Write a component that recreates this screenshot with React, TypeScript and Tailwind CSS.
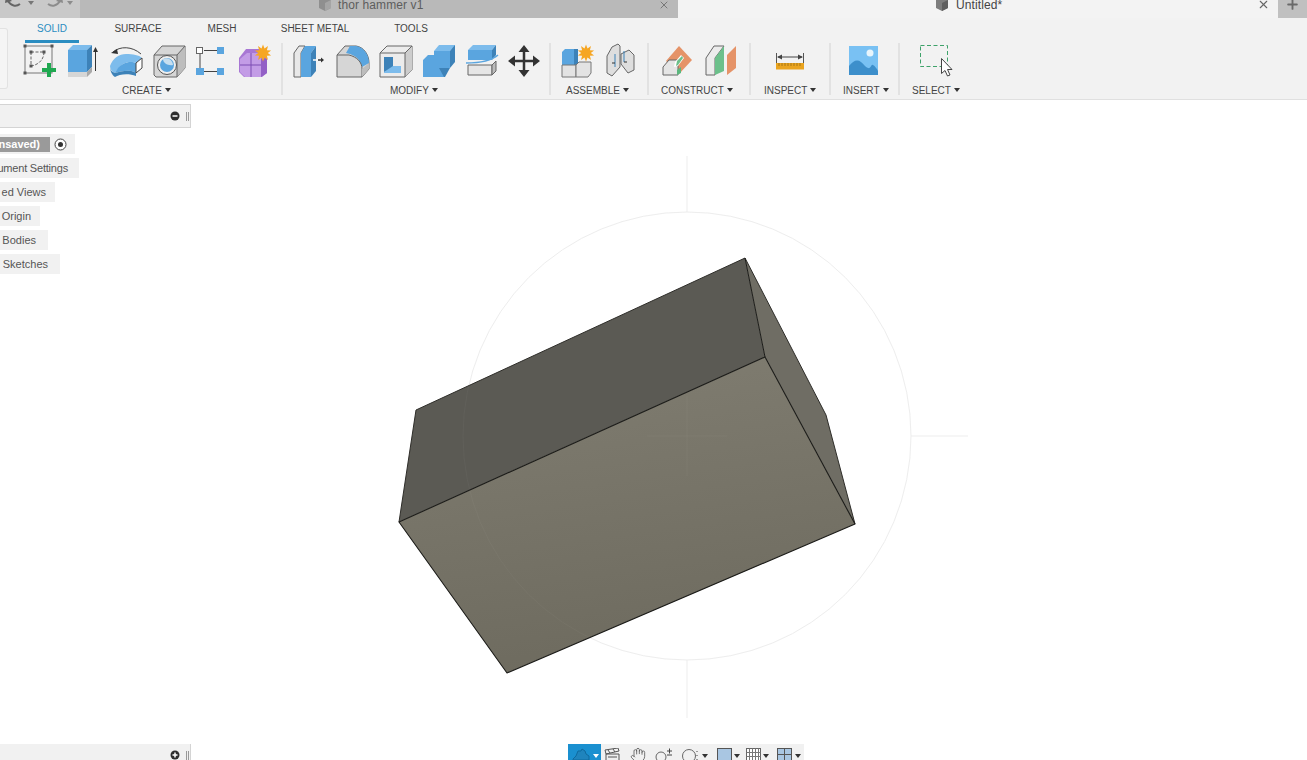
import React from "react";
import { Hand, X, Plus } from "lucide-react";

function star(cx: number, cy: number, R: number, r: number, n = 10) {
  const p: string[] = [];
  for (let i = 0; i < n * 2; i++) {
    const a = (Math.PI * i) / n;
    const q = i % 2 === 0 ? R : r;
    p.push(`${(cx + q * Math.sin(a)).toFixed(1)},${(cy - q * Math.cos(a)).toFixed(1)}`);
  }
  return p.join(" ");
}

function Caret() {
  return <span className="inline-block ml-[3px] w-0 h-0 border-l-[3px] border-r-[3px] border-t-[4px] border-l-transparent border-r-transparent border-t-[#333] align-[2px]" />;
}

function Icon({ w = 36, dx = 0, children }: { w?: number; dx?: number; children: React.ReactNode }) {
  return <svg width={w} height={36} viewBox={`${-dx} 0 ${w} 36`} className="shrink-0 overflow-visible">{children}</svg>;
}

const B = "#5aa5df", BD = "#3d82b8", BL = "#7dbcec", G = "#d6d6d6", GD = "#a9a9a9";

const SketchI = () => (
  <Icon>
    <rect x="3" y="3" width="27" height="27" fill="none" stroke="#777" />
    <path d="M9 9h13M9 9v14M22 9c0 8-6 13-13 14" fill="none" stroke="#666" strokeDasharray="3 1.500" />
    {[[3,3],[30,3],[3,30],[9,9],[22,9],[9,23]].map(([x,y],i)=><rect key={i} x={x-1.5} y={y-1.5} width="3" height="3" fill="#555"/>)}
    <path d="M25 20h4v5h5v4h-5v5h-4v-5h-5v-4h5z" fill="#1fa850"/>
  </Icon>
);
const ExtrudeI = () => (
  <Icon dx={2}>
    <path d="M1 7h19v22H1z" fill={B}/>
    <path d="M1 7l5-5h19l-5 5z" fill={BL}/>
    <path d="M20 7l5-5v22l-5 5z" fill={BD}/>
    <path d="M1 29h19v5H1z" fill={G}/>
    <path d="M20 29l5-5v5l-5 5z" fill={GD}/>
    <path d="M28.500 28V6" stroke="#333"/>
    <path d="M26 9l2.500-5 2.500 5z" fill="#333"/>
  </Icon>
);
const RevolveI = () => (
  <Icon dx={1}>
    <path d="M4 9C11 3 23 3 32 11" fill="none" stroke="#444"/>
    <path d="M2 10l6-4 1 5z" fill="#333"/>
    <path d="M1 23C4 15 10 11 17 11C24 11 30 12 33 15L27 20C22 18 18 19 14 21C11 23 8 27 6 30C3 29 1 26 1 23Z" fill={BL}/>
    <path d="M14 21C20 18 24 19 27 20V30C22 26 12 28 6 30C8 26 10 23 14 21Z" fill={B}/>
    <path d="M1 23C1 27 3 29 6 30C12 28 22 26 27 30V33C20 30 10 31 6 34C3 32 1 28 1 23Z" fill={BD}/>
    <path d="M27 20l6-5v10l-6 5z" fill="#fff" stroke="#444"/>
  </Icon>
);
const HoleI = () => (
  <Icon dx={1}>
    <path d="M2 12l8-9h23v22l-8 9H4l-2-2z" fill={G} stroke="#666"/>
    <path d="M25 12l8-9v22l-8 9z" fill="#bdbdbd"/>
    <path d="M2 12h23v22M25 12l8-9" fill="none" stroke="#666"/>
    <circle cx="15" cy="22" r="9.500" fill="#eee" stroke="#555"/>
    <circle cx="15" cy="22" r="7" fill={B}/>
    <path d="M11 16a7 7 0 0 1 10 6c-5 1-10-2-10-6z" fill="#c7deef"/>
  </Icon>
);
const FormPtsI = () => (
  <Icon dx={-2}>
    <path d="M12 7.500h13M8 11v14M12 28.500h13" stroke="#444" fill="none"/>
    <rect x="4.500" y="4.500" width="6" height="6" fill="#fff" stroke="#666"/>
    <rect x="25" y="4" width="7" height="7" fill={B}/>
    <rect x="4" y="25" width="8" height="7" fill={B}/>
    <rect x="25" y="25" width="7" height="7" fill={B}/>
  </Icon>
);
const FormI = () => (
  <Icon dx={-1}>
    <path d="M3 15l7-9 13 0 8 9v15l-5 4H8l-5-5z" fill="#a877d4"/>
    <path d="M4 16l7-6h14v24H9l-5-5z" fill="#c39ce6"/>
    <path d="M4 22h21M15 10v24" stroke="#7d4cb3" fill="none"/>
    <path d="M25 16l6-1v15l-6 4z" fill="#9360c6"/>
    <polygon points={star(27, 10, 8.500, 4.800)} fill="#f6a623"/>
  </Icon>
);
const PressPullI = () => (
  <Icon>
    <path d="M1 10L6 3h6L8 10v24H1z" fill="#e8e8e8" stroke="#666"/>
    <path d="M8 10l4-7h11l-5 7v24H8z" fill={B}/>
    <path d="M18 10l5-7v25l-5 6z" fill={BD}/>
    <path d="M20 17h5" stroke="#fff" strokeWidth="1.500"/>
    <path d="M25 17h4" stroke="#333" strokeWidth="1.500"/>
    <path d="M28 14.500l3 2.500-3 2.500z" fill="#333"/>
  </Icon>
);
const FilletI = () => (
  <Icon>
    <path d="M1 12l8-9h11c8 1 13 9 13 17v6l-7 8H1z" fill={G} stroke="#666"/>
    <path d="M14 3h6c8 1 13 9 13 17l-7 4c-1-5-4-10-12-13l-4-1z" fill={B}/>
    <path d="M1 12h12c8 2 13 7 13 14v8" fill="none" stroke="#666"/>
    <path d="M26 26l7-6v6l-7 8z" fill="#bdbdbd"/>
  </Icon>
);
const ShellI = () => (
  <Icon>
    <path d="M1 10l7-7h25v24l-7 7H1z" fill="#ececec" stroke="#666"/>
    <path d="M26 10l7-7v24l-7 7z" fill="#cdcdcd"/>
    <path d="M1 10h25v24M26 10l7-7" fill="none" stroke="#666"/>
    <path d="M5 14h9v13l-9 2z" fill={BD}/>
    <path d="M5 29l9-6h8l0 7H5z" fill={BL}/>
  </Icon>
);
const CombineI = () => (
  <Icon>
    <path d="M1 17l5-5h22v13h-5v9H1z" fill={B}/>
    <path d="M12 8l5-6h16v2l-5 4z" fill={BL}/>
    <path d="M12 8h16v17H12z" fill={B}/>
    <path d="M28 8l5-6v17l-5 6z" fill={BD}/>
    <path d="M17 25h11l-5 9h-1z" fill={BD}/>
  </Icon>
);
const SplitI = () => (
  <Icon>
    <path d="M3 7l5-5h23l-4 5z" fill={BL}/>
    <path d="M3 7h24v10H3z" fill={B}/>
    <path d="M27 7l4-5v10l-4 5z" fill={BD}/>
    <path d="M1 20c12 0 24-1 32-8" stroke="#5aa5df" strokeWidth="1.500" fill="none"/>
    <path d="M3 22h24v10H3z" fill="#e6e6e6" stroke="#666"/>
    <path d="M27 22l4-4v10l-4 4z" fill="#bbb" stroke="#666"/>
  </Icon>
);
const MoveI = () => (
  <Icon>
    <path d="M16 5v26M3 18h26" stroke="#333" strokeWidth="2.500"/>
    <path d="M16 2l5.500 7h-11zM16 34l5.500-7h-11zM0 18l7-5.500v11zM32 18l-7-5.500v11z" fill="#333"/>
  </Icon>
);
const NewCompI = () => (
  <Icon>
    <path d="M2 9l3-3h13v16H2z" fill={B}/>
    <path d="M14 6l4 0v16h-4z" fill={BD}/>
    <path d="M2 22h14v12H2z" fill="#e3e3e3" stroke="#777"/>
    <path d="M16 22l3-3h12v11l-3 4H16z" fill="#e3e3e3" stroke="#777"/>
    <polygon points={star(26, 10, 8.500, 4.800)} fill="#f6a623"/>
  </Icon>
);
const JointI = () => (
  <Icon w={30}>
    <path d="M2 13l5-9 6-3 2 2v21l-8 9-5-3z" fill="#dedede" stroke="#666"/>
    <path d="M29 12l-5-5-8 4v10l7 9 6-3z" fill="#dedede" stroke="#666"/>
    <path d="M10 11v13M19 8v11" stroke={BD} fill="none"/>
    <path d="M7 20h3M19 19h3" stroke="#333"/>
  </Icon>
);
const PlaneI = () => (
  <Icon>
    <path d="M7 18L20 3l13 14-13 14z" fill="#e59368"/>
    <path d="M4 24l6-7h9v15H4z" fill="#e5e5e5" stroke="#666"/>
    <path d="M16 19l6-7 3 3-6 8-4 1z" fill="#fff"/>
    <path d="M18 18l5-5 1 2-5 7-2 1z" fill="#6cc08b"/>
    <path d="M18 27l4-3v6l-4 2z" fill="#5bb77e"/>
  </Icon>
);
const MidPlaneI = () => (
  <Icon>
    <path d="M1 15L9 3h10L10 15v17H1z" fill="#ececec" stroke="#666"/>
    <path d="M10 15l9-12v25l-9 4z" fill="#6cc08b"/>
    <path d="M22 12l9-9v22l-9 7z" fill="#e59368"/>
  </Icon>
);
const MeasureI = () => (
  <Icon w={30}>
    <path d="M1.500 10v10M28.500 10v10" stroke="#555"/>
    <path d="M3 14h24" stroke="#444"/>
    <path d="M2 14l5-2.500v5zM28 14l-5-2.500v5z" fill="#444"/>
    <rect x="1" y="20" width="28" height="6.500" fill="#eaa41f"/>
    <path d="M4 20v3M7 20v3M10 20v3M13 20v3M16 20v3M19 20v3M22 20v3M25 20v3" stroke="#8a6410" strokeWidth=".7"/>
  </Icon>
);
const InsertI = () => (
  <Icon w={30}>
    <rect x="0" y="3" width="29" height="29" fill="#79c1f3"/>
    <circle cx="21" cy="10" r="3.500" fill="#e8f5fc"/>
    <path d="M0 32V23c4-5 8-7 12-4 3 2 4 5 7 6s3-4 5-3 4 4 5 6v4z" fill="#3d8fcb"/>
  </Icon>
);
const SelectI = () => (
  <Icon>
    <rect x="1.500" y="2.500" width="27" height="21" fill="none" stroke="#3ea26a" strokeDasharray="4 2.500"/>
    <path d="M22.500 15.500v15l3.500-3 2.500 5.500 2.500-1-2.500-5.500h4.500z" fill="#fff" stroke="#444"/>
  </Icon>
);

function Group({ label, children, gap, w, iconPl, labelPl }: { label: string; children: React.ReactNode; gap: string; w: string; iconPl: string; labelPl: string }) {
  return (
    <div className={`flex flex-col items-start shrink-0 ${w}`}>
      <div className={`flex items-start h-[38px] ${gap} ${iconPl}`}>{children}</div>
      <div className={`mt-[3px] text-[10px] leading-[14px] text-[#444] whitespace-nowrap ${labelPl}`}>{label}<Caret /></div>
    </div>
  );
}
const Sep = () => <div className="w-[2px] h-[52px] bg-[#e2e2e2] shrink-0" />;

function TreeRow({ children, w }: { children: React.ReactNode; w: string }) {
  return (
    <div className={`h-[20px] bg-[#f1f1f1] flex items-center justify-end overflow-hidden text-[11px] text-[#555] whitespace-nowrap ${w}`}>{children}</div>
  );
}

function Viewport() {
  const pts = (l: number[][]) => l.map(p => p.join(",")).join(" ");
  const s = (l: number[][]) => pts(l.map(([x, y]) => [x, y - 100]));
  return (
    <svg width="1307" height="660" viewBox="0 0 1307 660" className="absolute left-0 top-0">
      <defs>
        <linearGradient id="front" x1="0.400" y1="0" x2="0.600" y2="1">
          <stop offset="0" stopColor="#7f7c70" />
          <stop offset="1" stopColor="#6d6a5e" />
        </linearGradient>
      </defs>
      <circle cx="687" cy="336" r="224" fill="none" stroke="#ededed" />
      <path d="M687 56v56M687 560v58M911 336h57" stroke="#ededed" fill="none" />
      <polygon points={s([[416,410],[745,258],[765,357],[399,522]])} fill="#5b5a54" />
      <polygon points={s([[745,258],[826,415],[855,524],[765,357]])} fill="#6f6d64" />
      <polygon points={s([[399,522],[765,357],[855,524],[507,673]])} fill="url(#front)" />
      <circle cx="687" cy="336" r="224" fill="none" stroke="#fff" strokeOpacity="0.030" />
      <path d="M687 296v80M647 336h80" stroke="#fff" strokeOpacity="0.030" fill="none" />
      <g fill="none" strokeLinejoin="round">
        <polyline points={s([[399,522],[416,410],[745,258]])} stroke="#2e2d29" />
        <polyline points={s([[745,258],[826,415],[855,524]])} stroke="#2e2d29" />
        <polyline points={s([[745,258],[765,357]])} stroke="#1a1a17" />
        <polygon points={s([[399,522],[765,357],[855,524],[507,673]])} stroke="#1a1a17" strokeWidth="1.100" />
      </g>
    </svg>
  );
}

const NavIc = ({ w = 17, className = "", children }: { w?: number; className?: string; children: React.ReactNode }) => (
  <svg width={w} height={13} viewBox={`0 0 ${w} 13`} className={`shrink-0 mt-[4px] ${className}`}>{children}</svg>
);
const NavCaret = ({ className = "" }: { className?: string }) => (
  <span className={`shrink-0 mt-[10px] w-0 h-0 border-l-[3px] border-r-[3px] border-t-[4px] border-l-transparent border-r-transparent border-t-[#333] ${className}`} />
);

export default function App() {
  return (
    <div className="w-[1307px] h-[760px] overflow-hidden bg-white flex flex-col relative" style={{ fontFamily: "'Liberation Sans', Arial, sans-serif" }}>
      {/* tab bar */}
      <div className="h-[18px] flex shrink-0">
        <div className="w-[80px] bg-[#c9c9c9] overflow-hidden">
          <svg width="80" height="18" viewBox="0 0 80 18">
            <path d="M8 1c3 5 8 6 12 3" fill="none" stroke="#666" strokeWidth="2"/>
            <path d="M5 3l1-7 6 5z" fill="#666"/>
            <path d="M28 1h6l-3 4z" fill="#777"/>
            <path d="M60 1c-3 5-8 6-12 3" fill="none" stroke="#8c8c8c" strokeWidth="2"/>
            <path d="M63 3l-1-7-6 5z" fill="#8c8c8c"/>
            <path d="M67 1h6l-3 4z" fill="#8c8c8c"/>
          </svg>
        </div>
        <div className="w-[598px] bg-[#b9b9b9] relative">
          <div className="absolute left-[238px] top-[-3px] flex items-center gap-[5px]">
            <svg width="15" height="15" viewBox="0 0 15 15"><path d="M1 3l6-3 6 3v8l-6 3-6-3z" fill="#8f8f8f"/><path d="M7 6l6-3v8l-6 3z" fill="#a5a5a5"/></svg>
            <span className="text-[12px] leading-[14px] text-[#5d5d5d] tracking-[0.1px]">thor hammer v1</span>
          </div>
          <X size={12} color="#777" className="absolute right-[8px] top-[-1px]" />
        </div>
        <div className="w-[600px] bg-[#f3f3f3] relative">
          <div className="absolute left-[257px] top-[-3px] flex items-center gap-[6px]">
            <svg width="15" height="15" viewBox="0 0 15 15"><path d="M1 3l6-3 6 3v8l-6 3-6-3z" fill="#7d7d7d"/><path d="M7 6l6-3v8l-6 3z" fill="#5f5f5f"/></svg>
            <span className="text-[12px] leading-[14px] text-[#444] tracking-[0.1px]">Untitled*</span>
          </div>
          <X size={13} color="#666" className="absolute right-[8px] top-[-2px]" />
        </div>
        <div className="w-[29px] bg-[#c0c0c0] flex justify-center items-start">
          <Plus size={15} strokeWidth={3} color="#6a6a6a" className="mt-[-3px]" />
        </div>
      </div>

      {/* ribbon */}
      <div className="h-[82px] shrink-0 bg-[#f2f2f2] border-b border-[#e0e0e0] relative">
        <div className="absolute left-0 top-[10px] w-[8px] h-[61px] rounded-r-[3px] border border-l-0 border-[#e2e2e2] bg-[#f5f5f5]" />
        <div className="flex h-[25px] items-start pl-[25px] text-[10px] leading-[22px] text-[#444]">
          <div className="w-[54px] h-[25px] text-center text-[#2a8dc1] border-b-[3px] border-[#2a8dc1]">SOLID</div>
          <div className="w-[118px] text-center">SURFACE</div>
          <div className="w-[50px] text-center">MESH</div>
          <div className="w-[136px] text-center">SHEET METAL</div>
          <div className="w-[56px] text-center">TOOLS</div>
        </div>
        <div className="flex items-start">
          <Group label="CREATE" gap="gap-[7px]" w="w-[281px]" iconPl="pl-[22px]" labelPl="pl-[122px]"><SketchI /><ExtrudeI /><RevolveI /><HoleI /><FormPtsI /><FormI /></Group>
          <Sep />
          <Group label="MODIFY" gap="gap-[7px]" w="w-[266px]" iconPl="pl-[10px]" labelPl="pl-[107px]"><PressPullI /><FilletI /><ShellI /><CombineI /><SplitI /><MoveI /></Group>
          <Sep />
          <Group label="ASSEMBLE" gap="gap-[9px]" w="w-[96px]" iconPl="pl-[9px]" labelPl="pl-[15px]"><NewCompI /><JointI /></Group>
          <Sep />
          <Group label="CONSTRUCT" gap="gap-[10px]" w="w-[100px]" iconPl="pl-[10px]" labelPl="pl-[12px]"><PlaneI /><MidPlaneI /></Group>
          <Sep />
          <Group label="INSPECT" gap="" w="w-[78px]" iconPl="pl-[24px]" labelPl="pl-[13px]"><MeasureI /></Group>
          <Sep />
          <Group label="INSERT" gap="" w="w-[67px]" iconPl="pl-[18px]" labelPl="pl-[12px]"><InsertI /></Group>
          <Sep />
          <Group label="SELECT" gap="" w="w-[72px]" iconPl="pl-[19px]" labelPl="pl-[12px]"><SelectI /></Group>
        </div>
      </div>

      {/* viewport area */}
      <div className="relative flex-1">
        <Viewport />
        <div className="relative flex flex-col items-start w-[191px] pt-[4px]">
          <div className="w-[191px] h-[24px] bg-[#f1f1f1] border border-l-0 border-[#d4d4d4] flex items-center justify-end pr-[1px] gap-[6px]">
            <svg width="10" height="10" viewBox="0 0 10 10"><circle cx="5" cy="5" r="4.500" fill="#2e2e2e"/><path d="M2.500 5h5" stroke="#fff" strokeWidth="1.500"/></svg>
            <div className="w-[3px] h-[9px] border-x border-[#999]" />
          </div>
          <div className="mt-[6px] flex flex-col gap-[4px]">
            <div className="h-[20px] w-[75px] bg-[#f1f1f1] flex items-center">
              <div className="w-[50px] h-[15px] bg-[#9a9a9a] overflow-hidden flex justify-end items-center pr-[10px] text-[11px] font-bold text-white whitespace-nowrap">nsaved)</div>
              <svg width="13" height="13" viewBox="0 0 13 13" className="ml-[4px]"><circle cx="6.500" cy="6.500" r="5.500" fill="#fff" stroke="#444"/><circle cx="6.500" cy="6.500" r="2.500" fill="#333"/></svg>
            </div>
            <TreeRow w="w-[79px] pr-[11px] tracking-[-0.2px]">ument Settings</TreeRow>
            <TreeRow w="w-[55px] pr-[9px]">ed Views</TreeRow>
            <TreeRow w="w-[40px] pr-[9px]">Origin</TreeRow>
            <TreeRow w="w-[48px] pr-[12px]">Bodies</TreeRow>
            <TreeRow w="w-[60px] pr-[12px]">Sketches</TreeRow>
          </div>
        </div>

        {/* bottom */}
        <div className="absolute left-0 bottom-0 w-[191px] h-[16px] bg-[#f1f1f1] flex items-center justify-end pr-[1px] gap-[6px] border-r border-[#d4d4d4]">
          <svg width="10" height="10" viewBox="0 0 10 10" className="mt-[6px]"><circle cx="5" cy="5" r="4.500" fill="#2e2e2e"/><path d="M2.500 5h5M5 2.500v5" stroke="#fff" strokeWidth="1.500"/></svg>
          <div className="w-[3px] h-[9px] border-x border-[#999] mt-[6px]" />
        </div>
        <div className="absolute left-[568px] bottom-0 h-[16px] w-[236px] bg-[#f1f1f1] flex items-start">
          <div className="w-[33px] h-[16px] bg-[#1a90d0] flex items-start shrink-0">
            <svg width="19" height="13" viewBox="0 0 19 13" className="ml-[4px] mt-[4px] shrink-0"><path d="M1 11l3-3 2-5 3 0 1-2 3 2 1 3 3 2v4H1z" fill="#1f84bd" stroke="#0f6a9f"/></svg>
            <span className="shrink-0 ml-[2px] mt-[10px] w-0 h-0 border-l-[3px] border-r-[3px] border-t-[4px] border-l-transparent border-r-transparent border-t-white" />
          </div>
          <NavIc className="ml-[3px]"><path d="M2 6h13v8H2z" fill="#eee" stroke="#555"/><path d="M2 6L1 2 14 0l1 3zM4 2l2 3M9 1l2 3M4 9h9" fill="none" stroke="#555"/></NavIc>
          <Hand size={16} strokeWidth={1.200} color="#555" className="shrink-0 ml-[9px] mt-[3px]" />
          <NavIc className="ml-[9px]"><circle cx="6" cy="9" r="5" fill="none" stroke="#666"/><path d="M12 3h5M14.500 .500v5M12 7h5" stroke="#444"/></NavIc>
          <NavIc w={16} className="ml-[10px]"><circle cx="7" cy="8" r="6.500" fill="none" stroke="#666"/><path d="M15 3v1M15 7v1M15 11v1" stroke="#444"/></NavIc>
          <NavCaret className="ml-[4px]" />
          <NavIc w={15} className="ml-[9px]"><rect x=".5" y=".5" width="14" height="13" fill="#a9c6e2" stroke="#555"/></NavIc>
          <NavCaret className="ml-[2px]" />
          <NavIc w={15} className="ml-[6px]"><rect x=".5" y=".5" width="14" height="13" fill="#fff" stroke="#666"/><path d="M.5 4.500h14M.5 8.500h14M3.500 .5v13M6.500 .5v13M9.500 .5v13M12.500 .5v13" stroke="#777"/></NavIc>
          <NavCaret className="ml-[2px]" />
          <NavIc w={15} className="ml-[8px]"><rect x=".5" y=".5" width="14" height="13" fill="#a9c6e2" stroke="#555"/><path d="M.5 6.500h14M7.500 .5v13" stroke="#555"/></NavIc>
          <NavCaret className="ml-[3px]" />
        </div>
      </div>
    </div>
  );
}
